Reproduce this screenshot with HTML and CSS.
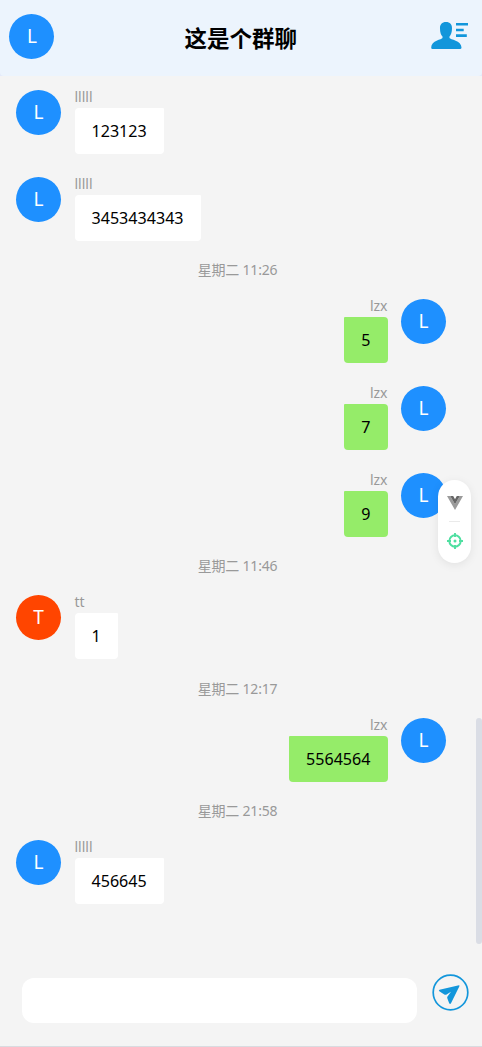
FILE: index.html
```html
<!DOCTYPE html>
<html lang="zh-CN">
<head>
<meta charset="utf-8">
<title>这是个群聊</title>
<link rel="stylesheet" href="styles.css">
</head>
<body>
<div class="app">
  <header class="header">
    <div class="avatar">L</div>
    <h1 class="title">这是个群聊</h1>
    <svg class="members" viewBox="0 0 40 30" fill="#1296db">
      <path d="M16 1C20 1 22.200 3.500 22 7.500C22 11.500 20.800 14 19.500 15.500V17C20 18.500 31.500 19.500 31.500 26.500Q31.500 28 30 28H2.500Q1.200 28 1.200 26.500C1.200 19.500 12 18.500 12.500 17V15.500C11 14 10 11.500 10 7.500C9.800 3.500 12 1 16 1Z"/>
      <path d="M26 2h12v2.600H26zM26 7.700h7.700v2.600H26zM26 13.300h10.800v2.700H26z"/>
    </svg>
  </header>
  <main class="messages">
    <div class="row"><div class="avatar">L</div><div class="content"><div class="name">lllll</div><div class="bubble">123123</div></div></div>
    <div class="row"><div class="avatar">L</div><div class="content"><div class="name">lllll</div><div class="bubble">3453434343</div></div></div>
    <div class="time"><span class="day">星期二</span> 11:26</div>
    <div class="row mine"><div class="avatar">L</div><div class="content"><div class="name">lzx</div><div class="bubble">5</div></div></div>
    <div class="row mine"><div class="avatar">L</div><div class="content"><div class="name">lzx</div><div class="bubble">7</div></div></div>
    <div class="row mine"><div class="avatar">L</div><div class="content"><div class="name">lzx</div><div class="bubble">9</div></div></div>
    <div class="time"><span class="day">星期二</span> 11:46</div>
    <div class="row"><div class="avatar orange">T</div><div class="content"><div class="name">tt</div><div class="bubble">1</div></div></div>
    <div class="time"><span class="day">星期二</span> 12:17</div>
    <div class="row mine"><div class="avatar">L</div><div class="content"><div class="name">lzx</div><div class="bubble">5564564</div></div></div>
    <div class="time"><span class="day">星期二</span> 21:58</div>
    <div class="row"><div class="avatar">L</div><div class="content"><div class="name">lllll</div><div class="bubble">456645</div></div></div>
  </main>
  <footer class="footer">
    <input class="input" type="text" aria-label="消息">
    <svg class="send" viewBox="0 0 37 37">
      <circle cx="18.500" cy="18.500" r="17.300" fill="none" stroke="#1296db" stroke-width="1.700"/>
      <path fill="#1296db" d="M27 11.200L7.500 15.700Q6.300 16.300 7.300 17.200L12.300 20.500Q13.500 21.100 14.600 20.500L19 17.800L15.500 22.400Q14.900 23.300 15.300 24.300L17.200 29.200Q18 30.600 19 29.300L27.400 12.200Q27.700 11.200 27 11.200Z"/>
    </svg>
  </footer>
  <div class="scrollbar"></div>
  <div class="devtools">
    <svg class="vue" viewBox="0 0 16 14"><path fill="#9b9b9b" d="M0 0h3.200L8 8.300L12.800 0H16L8 14Z"/><path fill="#666" d="M3.200 0h3L8 3.200L9.800 0h3L8 8.300Z"/></svg>
    <div class="divider"></div>
    <svg class="target" viewBox="0 0 16 16" fill="none" stroke="#4fdfa1" stroke-width="1.900"><circle cx="8" cy="8" r="5.700"/><path d="M8 0v4M8 12v4M0 8h4M12 8h4"/><circle cx="8" cy="8" r="1.500" fill="#4fdfa1" stroke="none"/></svg>
  </div>
</div>
</body>
</html>
```
FILE: styles.css
```css
* { box-sizing: border-box; }
body { margin: 0; background: #e4eafa; font-family: "Noto Sans", "Noto Sans CJK SC", sans-serif; }
.app {
  position: relative;
  width: 482px;
  height: 1047px;
  display: flex;
  flex-direction: column;
  overflow: hidden;
  border-bottom: 1px solid #d9dbe0;
}
.header {
  height: 76px;
  flex: none;
  display: flex;
  align-items: center;
  justify-content: space-between;
  padding: 0 12px 3px 9.400px;
  background: #ecf4fd;
  border-radius: 0 0 4px 4px;
}
.avatar {
  flex: none;
  width: 45px;
  height: 45px;
  border-radius: 50%;
  background: #1e90ff;
  color: #fff;
  font-size: 19px;
  line-height: 45px;
  text-align: center;
}
.orange { background: #ff4500; }
.title {
  margin: 0 0 0 -3px;
  font: bold 22.500px/30px "Noto Sans CJK SC", sans-serif;
  color: #000;
}
.members { width: 40px; height: 30px; margin-bottom: 2px; }
.messages { flex: 1; background: #f4f4f4; padding: 14px 36px 0 16px; min-height: 0; }
.row { display: flex; gap: 13.500px; height: 86.700px; }
.mine { flex-direction: row-reverse; }
.content { display: flex; flex-direction: column; align-items: flex-start; }
.mine .content { align-items: flex-end; }
.name { height: 18px; font-size: 14px; line-height: 14px; color: #999; }
.bubble {
  height: 46px;
  padding: 0 17px;
  border-radius: 4px 1px 4px 4px;
  background: #fff;
  color: #000;
  font-size: 16.100px;
  line-height: 47px;
}
.mine .bubble { background: #95ec69; border-radius: 1px 4px 4px 4px; }
.time { height: 35.900px; padding-left: 13px; font-size: 14px; line-height: 12px; color: #999; text-align: center; letter-spacing: -.2px; }
.day { font-family: "Noto Sans CJK SC", sans-serif; }
.footer {
  flex: none;
  height: 77px;
  display: flex;
  align-items: flex-start;
  justify-content: space-between;
  padding: 5px 13.500px 0 21.500px;
  background: #f4f4f4;
}
.input { width: 395.500px; height: 45px; margin-top: 4px; padding: 0 12px; border: 0; border-radius: 12px; background: #fff; outline: 0; }
.send { width: 37px; height: 37px; }
.scrollbar { position: absolute; right: 0; top: 718px; width: 6px; height: 226px; border-radius: 3px; background: #dadde5; }
.devtools {
  position: absolute;
  left: 438px;
  top: 480px;
  width: 33px;
  height: 83px;
  border-radius: 17px;
  background: #fff;
  box-shadow: 0 2px 10px rgba(0,0,0,.08);
  display: flex;
  flex-direction: column;
  align-items: center;
  padding-top: 16px;
}
.vue { width: 16px; height: 14px; }
.divider { width: 11px; height: 1px; margin: 11px 0 12px; background: #eaeaea; }
.target { width: 16px; height: 16px; margin-left: 1px; margin-top: -1px; }
```
